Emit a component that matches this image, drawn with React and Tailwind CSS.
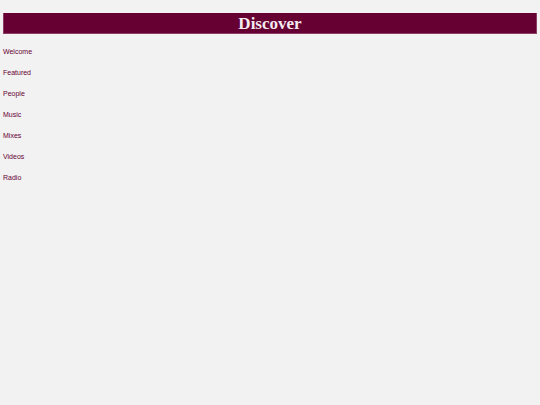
import React from 'react';

const links = ['Welcome', 'Featured', 'People', 'Music', 'Mixes', 'Videos', 'Radio'];

export default function App() {
  return (
    <div className="min-h-screen bg-[#f2f2f2] px-[3px] pt-[13px] font-['Liberation_Sans',Arial,sans-serif]">
      {/* Title bar */}
      <div className="h-[21px] flex items-center justify-center bg-[#660033] border-b border-x border-[#8c3d66]">
        <h1 className="text-[17px] leading-none font-bold text-[#f4eaf0] font-['Liberation_Serif','Times_New_Roman',serif]">
          Discover
        </h1>
      </div>

      {/* Nav */}
      <ul className="mt-[8px]">
        {links.map((l) => (
          <li key={l} className="h-[21px] flex items-center">
            <a href="#" className="text-[7px] text-[#660033]">
              {l}
            </a>
          </li>
        ))}
      </ul>
    </div>
  );
}
